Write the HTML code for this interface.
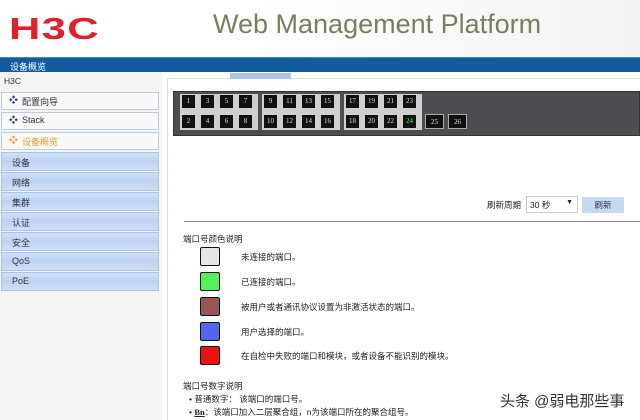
<!DOCTYPE html>
<html><head><meta charset="utf-8"><style>
*{margin:0;padding:0;box-sizing:border-box}
body{width:640px;height:420px;overflow:hidden;background:#fff;position:relative;font-family:"Liberation Sans","Noto Sans CJK SC",sans-serif;font-size:9px;color:#222}
.a{position:absolute}
#hdr{left:0;top:0;width:640px;height:57px;background:linear-gradient(90deg,#fff 0,#fff 40%,#f3f3f3 100%)}
#logo{left:9px;top:11px;font-size:31px;font-weight:bold;color:#e0202a;letter-spacing:1px;font-family:"Liberation Sans",sans-serif;transform:scaleX(1.4);transform-origin:left}
#title{left:213px;top:9px;font-size:27px;color:#7b7d62;font-family:"Liberation Sans",sans-serif}
#bar{left:0;top:57px;width:640px;height:15px;background:#135d9f;border-top:1px solid #4a86c0}
#bar span{position:absolute;left:10px;top:2px;color:#fff;font-size:9px}
#side{left:0;top:72px;width:162px;height:348px;background:#f4f4f4}
.it{position:absolute;left:1px;width:158px;height:18px;border:1px solid #b9cde4;background:#f8f8f8;font-size:9px;padding:2px 0 0 20px;color:#333}
.it b{position:absolute;left:7px;top:0px;font-size:9px;color:#26487a}
.bl{position:absolute;left:1px;width:158px;height:19px;border:1px solid #a8c4e6;background:linear-gradient(#cfe0f7,#bcd3f2 50%,#cfe0f7);font-size:9px;padding:3px 0 0 10px;color:#334}
#tab{left:230px;top:73px;width:61px;height:6px;background:#a8c4e6}
#cont{left:167px;top:78px;width:473px;height:342px;border-left:1px solid #ddd;border-top:1px solid #ddd}
#panel{left:173px;top:91px;width:467px;height:45px;background:#4e4d52;border:1px solid #333}
.g{position:absolute;top:94px;width:78px;height:36px;background:#cfcfcf}
.p{position:absolute;width:13px;height:13px;background:#111;color:#ddd;font-size:7px;text-align:center;line-height:13px;font-family:"Liberation Serif",serif}
.sw{position:absolute;left:200px;width:20px;height:19px;border:1px solid #111;border-radius:2px}
.t{position:absolute;font-size:8.5px;color:#222}
</style></head><body>
<div id="hdr" class="a"></div>
<div id="logo" class="a">H3C</div>
<div id="title" class="a">Web Management Platform</div>
<div id="bar" class="a"><span>设备概览</span></div>
<div id="side" class="a">
<div class="t" style="left:4px;top:4px;color:#333">H3C</div>
<div class="it" style="top:20px"><b>❖</b>配置向导</div>
<div class="it" style="top:40px"><b>❖</b>Stack</div>
<div class="it" style="top:60px;color:#e8a020"><b style="color:#e8a020">❖</b>设备概览</div>
<div class="bl" style="top:80px">设备</div>
<div class="bl" style="top:100px">网络</div>
<div class="bl" style="top:120px">集群</div>
<div class="bl" style="top:140px">认证</div>
<div class="bl" style="top:160px">安全</div>
<div class="bl" style="top:180px">QoS</div>
<div class="bl" style="top:200px">PoE</div>
</div>
<div id="cont" class="a"></div>
<div id="tab" class="a"></div>
<div id="panel" class="a"></div>
<div class="g" style="left:180px"></div>
<div class="g" style="left:262px"></div>
<div class="g" style="left:344px"></div>
<div class="p" style="left:182px;top:95px">1</div><div class="p" style="left:201px;top:95px">3</div><div class="p" style="left:220px;top:95px">5</div><div class="p" style="left:239px;top:95px">7</div>
<div class="p" style="left:182px;top:115px">2</div><div class="p" style="left:201px;top:115px">4</div><div class="p" style="left:220px;top:115px">6</div><div class="p" style="left:239px;top:115px">8</div>
<div class="p" style="left:264px;top:95px">9</div><div class="p" style="left:283px;top:95px">11</div><div class="p" style="left:302px;top:95px">13</div><div class="p" style="left:321px;top:95px">15</div>
<div class="p" style="left:264px;top:115px">10</div><div class="p" style="left:283px;top:115px">12</div><div class="p" style="left:302px;top:115px">14</div><div class="p" style="left:321px;top:115px">16</div>
<div class="p" style="left:346px;top:95px">17</div><div class="p" style="left:365px;top:95px">19</div><div class="p" style="left:384px;top:95px">21</div><div class="p" style="left:403px;top:95px">23</div>
<div class="p" style="left:346px;top:115px">18</div><div class="p" style="left:365px;top:115px">20</div><div class="p" style="left:384px;top:115px">22</div><div class="p" style="left:403px;top:115px;color:#4f4">24</div>
<div class="p" style="left:425px;top:114px;width:19px;height:15px;line-height:15px;border:1px solid #aaa">25</div>
<div class="p" style="left:448px;top:114px;width:19px;height:15px;line-height:15px;border:1px solid #aaa">26</div>
<div class="t" style="left:487px;top:199px">刷新周期</div>
<div class="a" style="left:526px;top:196px;width:52px;height:17px;border:1px solid #ccc;background:#fff;font-size:8.5px;padding:2px 0 0 3px">30 秒<span style="position:absolute;right:4px;top:2px;font-size:7px">▼</span></div>
<div class="a" style="left:582px;top:197px;width:42px;height:16px;background:#c7d9f1;font-size:8.5px;text-align:center;line-height:16px;color:#335">刷新</div>
<div class="a" style="left:184px;top:221px;width:456px;height:1px;background:#888"></div>
<div class="t" style="left:183px;top:233px">端口号颜色说明</div>
<div class="sw" style="top:247px;background:#e6e6e6"></div><div class="t" style="left:241px;top:251px">未连接的端口。</div>
<div class="sw" style="top:272px;background:#55f055"></div><div class="t" style="left:241px;top:276px">已连接的端口。</div>
<div class="sw" style="top:297px;background:#995555"></div><div class="t" style="left:241px;top:301px">被用户或者通讯协议设置为非激活状态的端口。</div>
<div class="sw" style="top:322px;background:#5566ee"></div><div class="t" style="left:241px;top:326px">用户选择的端口。</div>
<div class="sw" style="top:346px;background:#ee1111"></div><div class="t" style="left:241px;top:350px">在自检中失败的端口和模块，或者设备不能识别的模块。</div>
<div class="t" style="left:183px;top:380px">端口号数字说明</div>
<div class="t" style="left:189px;top:393px">• 普通数字： 该端口的端口号。</div>
<div class="t" style="left:189px;top:406px">• <u style="font-weight:bold;font-family:'Liberation Serif',serif">Bn</u>：该端口加入二层聚合组，n为该端口所在的聚合组号。</div>
<div class="a" style="left:500px;top:390px;font-size:15px;color:#333">头条 @弱电那些事</div>
</body></html>
